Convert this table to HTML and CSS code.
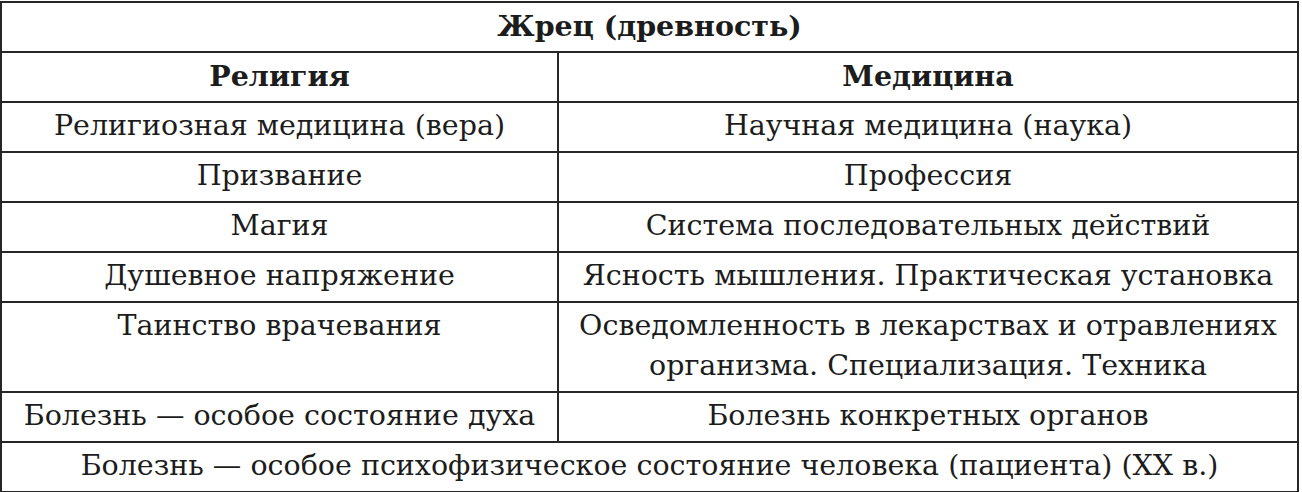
FILE: index.html
```html
<!DOCTYPE html>
<html lang="ru">
<head>
<meta charset="utf-8">
<link rel="stylesheet" href="styles.css">
</head>
<body>
<table class="grid">
  <colgroup><col class="c-left"><col class="c-right"></colgroup>
  <tr><th colspan="2" class="title">Жрец (древность)</th></tr>
  <tr><th>Религия</th><th>Медицина</th></tr>
  <tr><td>Религиозная медицина (вера)</td><td>Научная медицина (наука)</td></tr>
  <tr><td>Призвание</td><td>Профессия</td></tr>
  <tr><td>Магия</td><td>Система последовательных действий</td></tr>
  <tr><td>Душевное напряжение</td><td>Ясность мышления. Практическая установка</td></tr>
  <tr class="top"><td>Таинство врачевания</td><td>Осведомленность в лекарствах и отравлениях<br>организма. Специализация. Техника</td></tr>
  <tr><td>Болезнь — особое состояние духа</td><td>Болезнь конкретных органов</td></tr>
  <tr><td colspan="2">Болезнь — особое психофизическое состояние человека (пациента) (XX в.)</td></tr>
</table>
</body>
</html>
```
FILE: styles.css
```css
html, body {
  margin: 0;
  padding: 0;
  background: #ffffff;
}
body {
  padding-top: 1px;
}
.grid {
  border-collapse: collapse;
  width: 1299px;
  table-layout: fixed;
  font-family: "DejaVu Serif", "Liberation Serif", serif;
  font-size: 28.5px;
  color: #1c1c1c;
}
.c-left { width: 557px; }
.grid th, .grid td {
  border: 2px solid #262626;
  padding: 3px 0 5px;
  line-height: 40px;
  text-align: center;
  vertical-align: middle;
  white-space: nowrap;
}
.grid th {
  font-weight: bold;
}
.grid .top td {
  vertical-align: top;
}
```
